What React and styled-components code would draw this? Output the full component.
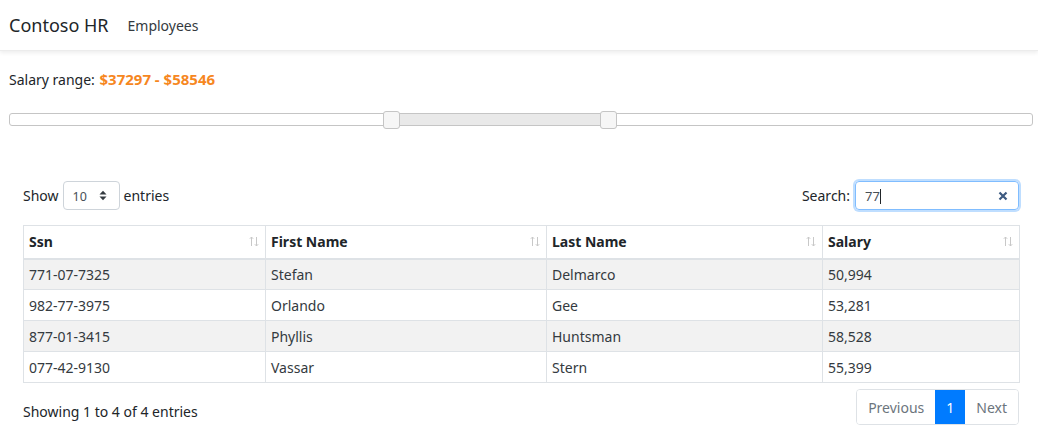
import styled, { createGlobalStyle } from "styled-components";

const GlobalStyle = createGlobalStyle`
	body {
		margin: 0;
		font-family: "Noto Sans", "Open Sans", sans-serif;
		color: #212529;
		background: #fff;
	}
`;

const rows = [
	{ ssn: "771-07-7325", first: "Stefan", last: "Delmarco", salary: "50,994" },
	{ ssn: "982-77-3975", first: "Orlando", last: "Gee", salary: "53,281" },
	{ ssn: "877-01-3415", first: "Phyllis", last: "Huntsman", salary: "58,528" },
	{ ssn: "077-42-9130", first: "Vassar", last: "Stern", salary: "55,399" },
];

const columns = [
	{ label: "Ssn", width: 242 },
	{ label: "First Name", width: 281 },
	{ label: "Last Name", width: 276 },
	{ label: "Salary", width: 197 },
];

const SortIcon = () => (
	<svg width="10" height="11" viewBox="0 0 10 11" fill="none" stroke="#c8c8c8" strokeWidth="1">
		<path d="M2.5 10V1M0.8 2.8L2.5 1L4.2 2.8" />
		<path d="M7.5 1V10M5.8 8.2L7.5 10L9.2 8.2" />
	</svg>
);

const App = () => {
	return (
		<>
			<GlobalStyle />
			<Navbar>
				<Brand>Contoso HR</Brand>
				<NavLink>Employees</NavLink>
			</Navbar>
			<Main>
				<RangeLabel>
					Salary range: <RangeValue>$37297 - $58546</RangeValue>
				</RangeLabel>
				<Slider>
					<Track>
						<Handle />
						<Fill />
						<Handle />
					</Track>
				</Slider>
				<TableArea>
					<Controls>
						<Length>
							Show
							<Select>
								<span>10</span>
								<svg width="8" height="11" viewBox="0 0 8 11" fill="#343a40">
									<path d="M0.5 4.5L4 0.8L7.5 4.5Z" />
									<path d="M0.5 6.5L4 10.2L7.5 6.5Z" />
								</svg>
							</Select>
							entries
						</Length>
						<SearchLabel>
							Search:
							<SearchBox>
								<span>
									77<Caret />
								</span>
								<svg width="10" height="10" viewBox="0 0 10 10" stroke="#3d5a80" strokeWidth="2.2">
									<path d="M1.5 1.5L8.5 8.5M8.5 1.5L1.5 8.5" />
								</svg>
							</SearchBox>
						</SearchLabel>
					</Controls>
					<Table>
						<thead>
							<tr>
								{columns.map((c) => (
									<Th key={c.label} style={{ width: c.width }}>
										<HeadInner>
											{c.label}
											<SortIcon />
										</HeadInner>
									</Th>
								))}
							</tr>
						</thead>
						<tbody>
							{rows.map((r, i) => (
								<Tr key={r.ssn} $striped={i % 2 === 0}>
									<Td>{r.ssn}</Td>
									<Td>{r.first}</Td>
									<Td>{r.last}</Td>
									<Td>{r.salary}</Td>
								</Tr>
							))}
						</tbody>
					</Table>
					<Footer>
						<Info>Showing 1 to 4 of 4 entries</Info>
						<Pagination>
							<PageButton $disabled>Previous</PageButton>
							<PageButton $active>1</PageButton>
							<PageButton $disabled>Next</PageButton>
						</Pagination>
					</Footer>
				</TableArea>
			</Main>
		</>
	);
};

export default App;

const Navbar = styled.nav`
	height: 51px;
	display: flex;
	align-items: center;
	padding: 0 9px;
	background: #fff;
	box-shadow: 0 2px 4px rgba(0, 0, 0, 0.07);
	border-bottom: 1px solid #ececec;
	box-sizing: border-box;
`;

const Brand = styled.span`
	font-size: 18px;
	color: #212529;
	margin-right: 19px;
`;

const NavLink = styled.span`
	font-size: 14px;
	color: #343a40;
`;

const Main = styled.main`
	padding: 18px 5px 0 9px;
`;

const RangeLabel = styled.div`
	font-size: 14px;
	line-height: 20px;
	color: #212529;
`;

const RangeValue = styled.span`
	color: #f6871f;
	font-weight: 700;
	font-size: 15px;
	margin-left: 1px;
`;

const Slider = styled.div`
	margin-top: 23px;
`;

const Track = styled.div`
	height: 11px;
	border: 1px solid #c5c5c5;
	border-radius: 3px;
	display: flex;
	align-items: center;
	padding-left: 373px;
	background: #fff;
`;

const Handle = styled.div`
	width: 15px;
	height: 16px;
	border: 1px solid #c5c5c5;
	border-radius: 3px;
	background: #f6f6f6;
	flex-shrink: 0;
	z-index: 1;
`;

const Fill = styled.div`
	width: 200px;
	height: 11px;
	background: #e9e9e9;
`;

const TableArea = styled.div`
	margin: 58px 14px 0 14px;
`;

const Controls = styled.div`
	display: flex;
	justify-content: space-between;
	align-items: center;
	font-size: 14px;
	margin-bottom: 15px;
`;

const Length = styled.label`
	display: flex;
	align-items: center;
	gap: 4px;
	margin-top: -4px;
`;

const Select = styled.div`
	width: 57px;
	height: 29px;
	box-sizing: border-box;
	border: 1px solid #ced4da;
	border-radius: 4px;
	display: flex;
	align-items: center;
	justify-content: space-between;
	padding: 3px 12px 0 9px;
	font-size: 12.5px;
	color: #495057;
	svg {
		margin-top: -3px;
	}
`;

const SearchLabel = styled.label`
	display: flex;
	align-items: center;
	gap: 5px;
	margin-top: -3px;
`;

const SearchBox = styled.div`
	width: 164px;
	height: 29px;
	box-sizing: border-box;
	border: 1px solid #80bdff;
	border-radius: 4px;
	box-shadow: 0 0 0 2px rgba(0, 123, 255, 0.25);
	display: flex;
	align-items: center;
	justify-content: space-between;
	padding: 0 10px 0 9px;
	font-size: 13px;
	color: #495057;
`;

const Caret = styled.span`
	display: inline-block;
	width: 1px;
	height: 15px;
	background: #212529;
	vertical-align: -3px;
`;

const Table = styled.table`
	width: 996px;
	border-collapse: collapse;
	table-layout: fixed;
	font-size: 14px;
	border: 1px solid #dee2e6;
`;

const Th = styled.th`
	height: 33px;
	padding: 0 6px 0 5px;
	text-align: left;
	font-weight: 700;
	border: 1px solid #dee2e6;
	border-bottom: 2px solid #dee2e6;
	box-sizing: border-box;
`;

const HeadInner = styled.div`
	display: flex;
	justify-content: space-between;
	align-items: center;
`;

const Tr = styled.tr`
	background: ${(p) => (p.$striped ? "#f2f2f2" : "#fff")};
`;

const Td = styled.td`
	height: 31px;
	padding: 0 5px;
	border: 1px solid #dee2e6;
	color: #343a40;
	box-sizing: border-box;
`;

const Footer = styled.div`
	display: flex;
	justify-content: space-between;
	align-items: center;
	margin-top: 6px;
`;

const Info = styled.div`
	font-size: 14px;
	padding-top: 9px;
`;

const Pagination = styled.div`
	display: flex;
	border: 1px solid #dee2e6;
	border-radius: 4px;
	overflow: hidden;
`;

const PageButton = styled.div`
	height: 34px;
	display: flex;
	align-items: center;
	padding: 0 11px;
	font-size: 14px;
	color: ${(p) => (p.$active ? "#fff" : "#6c757d")};
	background: ${(p) => (p.$active ? "#007bff" : "#fff")};
	& + & {
		border-left: ${(p) => (p.$active ? "none" : "1px solid #dee2e6")};
	}
`;
